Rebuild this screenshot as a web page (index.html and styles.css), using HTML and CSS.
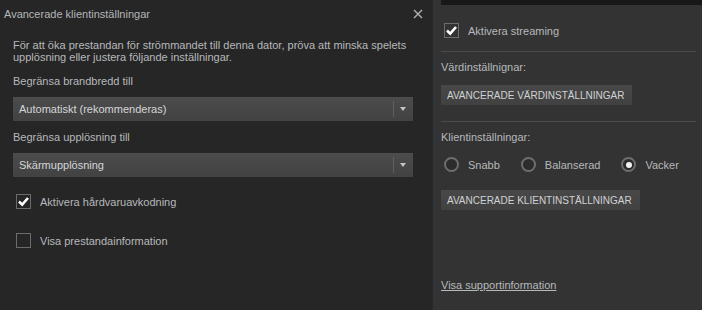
FILE: index.html
```html
<!DOCTYPE html>
<html lang="sv">
<head>
  <meta charset="UTF-8">
  <title>Steam - Streaming</title>
  <link rel="stylesheet" href="styles.css">
</head>
<body>

  <div class="app">

    <!-- Dialog: avancerade klientinstallningar -->
    <div class="dialog">
      <div class="dialog-title">
        <span>Avancerade klientinställningar</span>
        <button class="close-btn" title="Stäng">
          <svg width="10" height="10" viewBox="0 0 10 10">
            <path d="M1 1 L9 9 M9 1 L1 9" stroke="#b0b0b0" stroke-width="1.4" fill="none"/>
          </svg>
        </button>
      </div>

      <div class="dialog-body">
        <p class="intro">För att öka prestandan för strömmandet till denna dator, pröva att minska spelets upplösning eller justera följande inställningar.</p>

        <div class="field-label">Begränsa brandbredd till</div>
        <div class="select">
          <span class="select-value">Automatiskt (rekommenderas)</span>
          <span class="select-arrow"></span>
        </div>

        <div class="field-label">Begränsa upplösning till</div>
        <div class="select">
          <span class="select-value">Skärmupplösning</span>
          <span class="select-arrow"></span>
        </div>

        <label class="check">
          <span class="check-box checked">
            <svg width="13" height="13" viewBox="0 0 13 13">
              <path d="M2 6.5 L5.2 9.6 L11 3" stroke="#fff" stroke-width="2.6" fill="none"/>
            </svg>
          </span>
          Aktivera hårdvaruavkodning
        </label>

        <label class="check check-second">
          <span class="check-box"></span>
          Visa prestandainformation
        </label>
      </div>
    </div>

    <!-- Panel: in-home streaming -->
    <div class="stream-panel">
      <div class="top-bar"></div>

      <label class="check stream-check">
        <span class="check-box checked">
          <svg width="13" height="13" viewBox="0 0 13 13">
            <path d="M2 6.5 L5.2 9.6 L11 3" stroke="#fff" stroke-width="2.6" fill="none"/>
          </svg>
        </span>
        Aktivera streaming
      </label>

      <div class="divider"></div>
      <div class="section-label">Värdinställnignar:</div>
      <button class="panel-btn">Avancerade värdinställningar</button>

      <div class="divider divider-client"></div>
      <div class="section-label">Klientinställningar:</div>
      <div class="radio-row">
        <label class="radio"><span class="radio-dot"></span>Snabb</label>
        <label class="radio"><span class="radio-dot"></span>Balanserad</label>
        <label class="radio"><span class="radio-dot selected"></span>Vacker</label>
      </div>
      <button class="panel-btn btn-client">Avancerade klientinställningar</button>

      <a class="support-link" href="#">Visa supportinformation</a>
    </div>

  </div>

</body>
</html>
```

FILE: styles.css
```css
html, body {
  margin: 0;
  padding: 0;
}

body {
  font-family: "Liberation Sans", Arial, sans-serif;
  font-size: 11px;
  line-height: 12px;
  color: #b6b9bc;
  background: #262626;
}

.app {
  display: flex;
  width: 702px;
  height: 310px;
  overflow: hidden;
}

/* dialog */
.dialog {
  width: 432px;
  flex-shrink: 0;
  background: #262626;
}

.dialog-title {
  height: 28px;
  line-height: 28px;
  padding-left: 4px;
  display: flex;
  justify-content: space-between;
  align-items: center;
  color: #b4b6b8;
}

.close-btn {
  border: none;
  background: none;
  padding: 0;
  margin-right: 9px;
  width: 10px;
  height: 10px;
  display: flex;
  margin-top: -1px;
  cursor: pointer;
}

.dialog-body {
  padding: 11px 19px 0 13px;
}

.intro {
  margin: 0 0 12px;
}

.field-label {
  margin-bottom: 10px;
}

.select {
  height: 24px;
  display: flex;
  align-items: center;
  background: linear-gradient(to bottom, #4c4c4c, #424242);
  margin-bottom: 10px;
}

.select-value {
  flex: 1;
  padding-left: 6px;
  color: #d4d6d8;
}

.select-arrow {
  width: 19px;
  height: 16px;
  border-left: 1px solid #5f5f5f;
  position: relative;
}

.select-arrow::after {
  content: "";
  position: absolute;
  left: 6px;
  top: 6px;
  border-left: 3.5px solid transparent;
  border-right: 3.5px solid transparent;
  border-top: 4.5px solid #c4c4c4;
}

/* checkbox */
.check {
  display: flex;
  align-items: center;
  height: 15px;
  margin-left: 3px;
  cursor: pointer;
}

.dialog .check {
  margin-top: 17px;
}

.dialog .check-second {
  margin-top: 24px;
}

.check-box {
  width: 13px;
  height: 13px;
  border: 1px solid #6c6c6c;
  margin-right: 9px;
  display: flex;
  align-items: center;
  justify-content: center;
}

/* right panel */
.stream-panel {
  flex: 1;
  background: #333333;
  border-left: 1px solid #1f2a34;
  padding-left: 8px;
  display: flex;
  flex-direction: column;
  align-items: flex-start;
}

.top-bar {
  align-self: stretch;
  height: 5px;
  background: #181818;
}

.stream-check {
  margin-top: 18px;
}

.divider {
  align-self: stretch;
  height: 1px;
  background: #4b4b4b;
  margin: 13px 6px 0 0;
}

.divider-client {
  margin-top: 16px;
}

.section-label {
  margin-top: 9px;
}

.panel-btn {
  margin-top: 12px;
  height: 20px;
  padding: 0 8px 0 6px;
  border: none;
  background: linear-gradient(to bottom, #484848, #414141);
  color: #d0d2d4;
  font-family: "Liberation Sans", Arial, sans-serif;
  font-size: 10px;
  text-transform: uppercase;
  cursor: pointer;
}

.radio-row {
  display: flex;
  gap: 21px;
  margin-top: 14px;
  margin-left: 3px;
}

.radio {
  display: flex;
  align-items: center;
  height: 15px;
}

.radio-dot {
  width: 11px;
  height: 11px;
  border: 2px solid #6e6e6e;
  border-radius: 50%;
  background: #2c2c2c;
  margin-right: 9px;
  position: relative;
}

.radio-dot.selected::after {
  content: "";
  position: absolute;
  left: 2.5px;
  top: 2.5px;
  width: 6px;
  height: 6px;
  border-radius: 50%;
  background: #f2f2f2;
}

.btn-client {
  margin-top: 18px;
}

.support-link {
  margin-top: auto;
  margin-bottom: 19px;
  color: #b6b9bc;
  text-decoration: underline;
}
```
